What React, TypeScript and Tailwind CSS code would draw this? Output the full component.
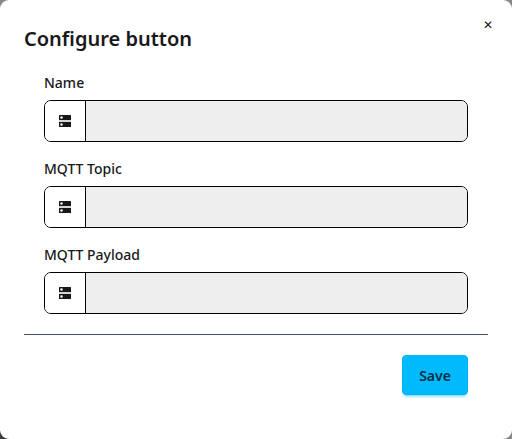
import React from "react";

function ServerIcon() {
  return (
    <svg width="12" height="12" viewBox="0 0 12 12" fill="currentColor">
      <path d="M0 5h12v2H0z" fill="#d6d6d6" />
      <path fillRule="evenodd" d="M.5 0h11a.5.5 0 0 1 .5.5V5H0V.5A.5.5 0 0 1 .5 0ZM2.5 1.2a1.3 1.3 0 1 0 0 2.6a1.3 1.3 0 0 0 0-2.6Z" />
      <path fillRule="evenodd" d="M0 7h12v4.5a.5.5 0 0 1-.5.5H.5a.5.5 0 0 1-.5-.5ZM2.5 8.2a1.3 1.3 0 1 0 0 2.6a1.3 1.3 0 0 0 0-2.6Z" />
    </svg>
  );
}

function Field({ label }: { label: string }) {
  return (
    <label className="block h-[86px]">
      <span className="block h-[27px] text-sm leading-5 font-medium">{label}</span>
      <span className="flex h-[42px] overflow-hidden rounded-[7px] border border-black">
        <span className="flex w-[41px] shrink-0 items-center justify-center border-r border-black bg-white">
          <ServerIcon />
        </span>
        <input className="min-w-0 flex-1 bg-[#eeeeee] outline-none" />
      </span>
    </label>
  );
}

export default function App() {
  return (
    <div className="h-[439px] w-[512px] bg-[linear-gradient(45deg,#3c3c3c_0_20%,#888888_20%)] font-['Noto_Sans',sans-serif] text-[#18181b]">
      <div className="flex h-full flex-col rounded-[9px] bg-white px-6">
        <header className="flex justify-between">
          <h1 className="pt-[25px] text-xl leading-7 font-semibold">Configure button</h1>
          <button className="-mr-4 mt-[9px] h-8 w-8 text-xs leading-5">✕</button>
        </header>
        <main className="mt-5 px-5">
          <Field label="Name" />
          <Field label="MQTT Topic" />
          <Field label="MQTT Payload" />
        </main>
        <footer className="mt-[3px] flex justify-end border-t border-[#45506a] px-5 pt-5">
          <button className="h-10 w-[66px] rounded border border-[#00b2f7] bg-[#00bafe] pt-[2px] text-sm leading-5 font-semibold text-[#042e49] shadow-[0_3px_2px_-2px_#00bafe4d,0_4px_3px_-2px_#00bafe4d]">Save</button>
        </footer>
      </div>
    </div>
  );
}
